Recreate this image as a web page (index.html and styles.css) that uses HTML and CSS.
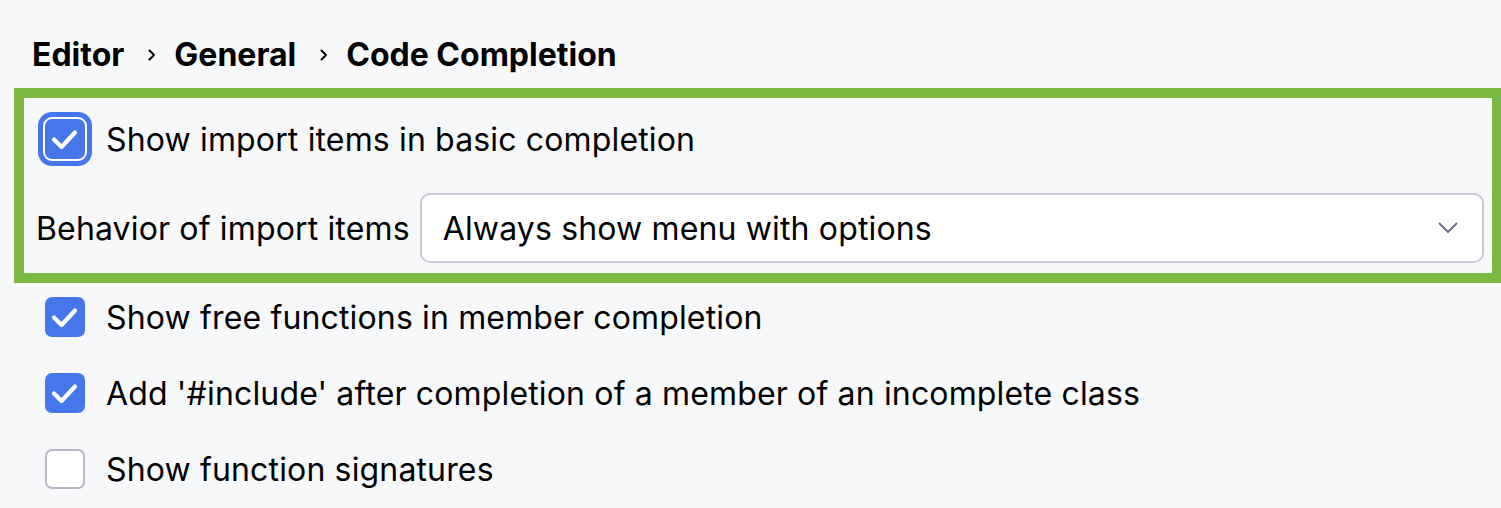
FILE: index.html
```html
<!DOCTYPE html>
<html lang="en">
<head>
<meta charset="utf-8">
<title>Code Completion</title>
<link rel="stylesheet" href="styles.css">
</head>
<body>
<div class="page">
  <div class="breadcrumb">
    <span>Editor</span>
    <svg class="crumb-sep" width="8" height="12" viewBox="0 0 8 12"><path d="M1.5 1.5 L6 6 L1.5 10.5" fill="none" stroke="#000" stroke-width="2" stroke-linecap="round" stroke-linejoin="round"/></svg>
    <span>General</span>
    <svg class="crumb-sep" width="8" height="12" viewBox="0 0 8 12"><path d="M1.5 1.5 L6 6 L1.5 10.5" fill="none" stroke="#000" stroke-width="2" stroke-linecap="round" stroke-linejoin="round"/></svg>
    <span>Code Completion</span>
  </div>

  <div class="highlight">
    <div class="row row-first">
      <span class="checkbox checked focused">
        <svg width="40" height="40" viewBox="0 0 40 40"><path d="M9 20.5 L16.5 28 L30 13.5" fill="none" stroke="#fff" stroke-width="4.2" stroke-linecap="round" stroke-linejoin="round"/></svg>
      </span>
      <span class="label">Show import items in basic completion</span>
    </div>
    <div class="row row-combo">
      <span class="combo-label">Behavior of import items</span>
      <div class="combo">
        <span class="combo-value">Always show menu with options</span>
        <svg class="combo-arrow" width="20" height="12" viewBox="0 0 20 12"><path d="M1.5 1.5 L10 10 L18.5 1.5" fill="none" stroke="#6c707e" stroke-width="2" stroke-linecap="round" stroke-linejoin="round"/></svg>
      </div>
    </div>
  </div>

  <div class="options">
    <div class="row">
      <span class="checkbox checked">
        <svg width="40" height="40" viewBox="0 0 40 40"><path d="M9 20.5 L16.5 28 L30 13.5" fill="none" stroke="#fff" stroke-width="4.2" stroke-linecap="round" stroke-linejoin="round"/></svg>
      </span>
      <span class="label">Show free functions in member completion</span>
    </div>
    <div class="row">
      <span class="checkbox checked">
        <svg width="40" height="40" viewBox="0 0 40 40"><path d="M9 20.5 L16.5 28 L30 13.5" fill="none" stroke="#fff" stroke-width="4.2" stroke-linecap="round" stroke-linejoin="round"/></svg>
      </span>
      <span class="label">Add '#include' after completion of a member of an incomplete class</span>
    </div>
    <div class="row">
      <span class="checkbox"></span>
      <span class="label">Show function signatures</span>
    </div>
  </div>
</div>
</body>
</html>
```

FILE: styles.css
```css
html, body {
  margin: 0;
  padding: 0;
  background: #f7f8fa;
  overflow: hidden;
}

body {
  font-family: Inter, "Noto Sans", "Liberation Sans", sans-serif;
  color: #000;
  width: 1501px;
  height: 508px;
}

.page {
  display: flex;
  flex-direction: column;
}

.breadcrumb {
  display: flex;
  align-items: center;
  padding: 37px 0 0 32px;
  font-size: 32px;
  font-weight: 700;
  line-height: 36px;
  height: 36px;
}

.crumb-sep {
  margin: 0 18px 0 24px;
}

.highlight {
  margin: 15px 0 0 14px;
  border: 10px solid #7aba43;
  border-right-width: 9px;
  display: flex;
  flex-direction: column;
  padding: 0 8px 10px 0;
}

.row {
  display: flex;
  align-items: center;
  height: 40px;
  padding-left: 45px;
}

.highlight .row {
  padding-left: 21px;
}

.highlight .row-first {
  height: 82px;
}

.highlight .row-combo {
  margin-top: 13px;
  height: 70px;
  padding-left: 12px;
}

.checkbox {
  flex: none;
  width: 36px;
  height: 36px;
  border: 2px solid #b5b9c6;
  border-radius: 7px;
  background: #fff;
  display: flex;
  align-items: center;
  justify-content: center;
  margin-right: 21px;
}

.checkbox svg {
  flex: none;
}

.checkbox.checked {
  width: 40px;
  height: 40px;
  border: none;
  background: #4677ea;
}

.checkbox.focused {
  box-shadow: 0 0 0 2px #fff, 0 0 0 7px #4677ea;
}

.label,
.combo-label,
.combo-value {
  font-size: 32px;
  line-height: 40px;
  letter-spacing: 0.15px;
  white-space: nowrap;
  padding-top: 2px;
}

.combo-label {
  margin-right: 10px;
}

.combo {
  flex: 1;
  height: 66px;
  border: 2px solid #c9ccd6;
  border-radius: 10px;
  background: #fff;
  display: flex;
  align-items: center;
  padding: 0 24px 0 21px;
}

.combo-value {
  flex: 1;
}

.combo-arrow {
  flex: none;
}

.options {
  display: flex;
  flex-direction: column;
  gap: 36px;
  margin-top: 14px;
}
```
